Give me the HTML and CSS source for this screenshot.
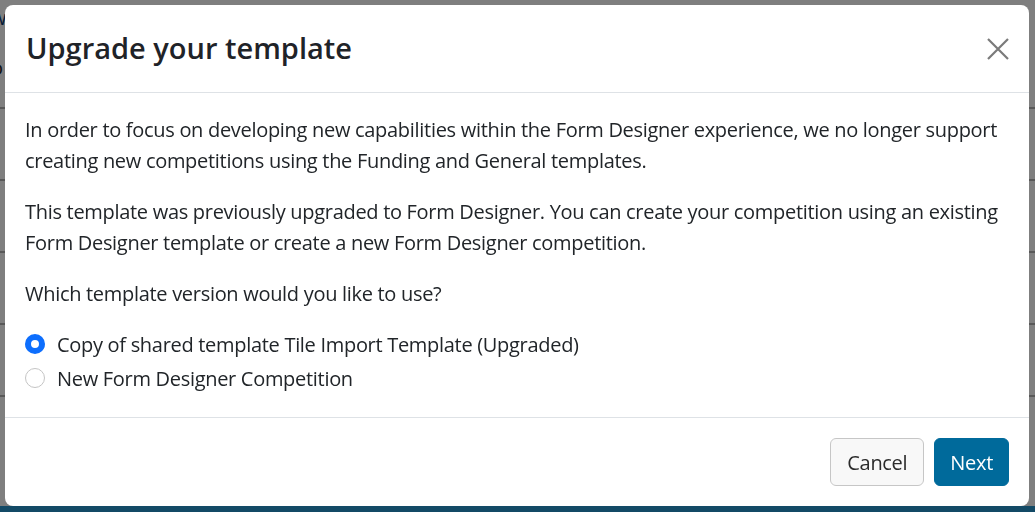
FILE: index.html
```html
<!DOCTYPE html>
<html lang="en">
<head>
  <meta charset="UTF-8" />
  <meta name="viewport" content="width=device-width, initial-scale=1.0"/>
  <title>Upgrade your template</title>
  <link rel="stylesheet" href="styles.css">
</head>
<body>
  <div class="page">
    <div class="pageRow pageTop">
      <span class="pageText linkText">w</span>
      <span class="pageText">o</span>
    </div>
    <div class="pageRow"></div>
    <div class="pageRow"></div>
    <div class="pageRow"></div>
    <div class="pageRow"></div>
    <div class="pageFooter"></div>
  </div>

  <div class="backdrop"></div>

  <div class="dialog" role="dialog">
    <div class="dialogHeader">
      <h2 class="dialogTitle">Upgrade your template</h2>
      <button class="closeBtn" aria-label="Close">
        <svg width="22" height="22" viewBox="0 0 22 22">
          <path d="M1 1 L21 21 M21 1 L1 21" stroke="#7a7a7a" stroke-width="2.2" fill="none"/>
        </svg>
      </button>
    </div>

    <div class="dialogBody">
      <p>In order to focus on developing new capabilities within the Form Designer experience, we no longer support creating new competitions using the Funding and General templates.</p>
      <p>This template was previously upgraded to Form Designer. You can create your competition using an existing Form Designer template or create a new Form Designer competition.</p>
      <p class="question">Which template version would you like to use?</p>

      <label class="option">
        <input type="radio" name="version" checked>
        <span class="radioMark"></span>
        Copy of shared template Tile Import Template (Upgraded)
      </label>
      <label class="option">
        <input type="radio" name="version">
        <span class="radioMark"></span>
        New Form Designer Competition
      </label>
    </div>

    <div class="dialogFooter">
      <button class="btn btnCancel">Cancel</button>
      <button class="btn btnNext">Next</button>
    </div>
  </div>
</body>
</html>
```

FILE: styles.css
```css
* {
  box-sizing: border-box;
}

body {
  margin: 0;
  height: 512px;
  overflow: hidden;
  font-family: 'Open Sans', 'Noto Sans', sans-serif;
  background: #fff;
  color: #212529;
}

.page {
  height: 512px;
  display: flex;
  flex-direction: column;
}

.pageRow {
  height: 72px;
  border-bottom: 2px solid #b0b0b0;
}

.pageTop {
  height: 109px;
  display: flex;
  flex-direction: column;
  gap: 20px;
  padding-top: 3px;
}

.pageText {
  display: block;
  margin-left: -9px;
  font-size: 20px;
  line-height: 30px;
  color: #222;
}

.linkText {
  color: #0b3a6e;
}

.pageFooter {
  margin-top: auto;
  height: 6px;
  background: #2694cc;
}

.backdrop {
  position: fixed;
  inset: 0;
  background: rgba(0, 0, 0, 0.5);
}

.dialog {
  position: fixed;
  left: 5px;
  top: 5px;
  width: 1024px;
  height: 501px;
  background: #fff;
  border-radius: 8px;
  display: flex;
  flex-direction: column;
}

.dialogHeader {
  height: 88px;
  flex-shrink: 0;
  display: flex;
  align-items: center;
  justify-content: space-between;
  padding: 0 20px 0 21px;
  border-bottom: 1px solid #dee2e6;
}

.dialogTitle {
  margin: 0;
  font-size: 29px;
  font-weight: 600;
  line-height: 1.2;
  color: #1f2328;
}

.closeBtn {
  background: transparent;
  border: 0;
  padding: 0;
  width: 22px;
  height: 22px;
  cursor: pointer;
  display: flex;
}

.dialogBody {
  padding: 21px 20px 22px;
  font-size: 20px;
  line-height: 31px;
  letter-spacing: -0.3px;
  border-bottom: 1px solid #dee2e6;
}

.dialogBody p {
  margin: 0 0 20px;
}

.dialogBody .question {
  margin-bottom: 18px;
}

.option {
  display: flex;
  align-items: center;
  gap: 12px;
  height: 34px;
  cursor: pointer;
}

.option input {
  display: none;
}

.radioMark {
  width: 20px;
  height: 20px;
  border-radius: 50%;
  border: 1px solid #c4c4c4;
  background: #fff;
  flex-shrink: 0;
}

.option input:checked + .radioMark {
  border: 6px solid #0d6efd;
  background: #fff;
}

.dialogFooter {
  flex: 1;
  display: flex;
  align-items: center;
  justify-content: flex-end;
  gap: 10px;
  padding: 0 20px;
}

.btn {
  height: 48px;
  padding: 0 16px;
  font-family: inherit;
  font-size: 20px;
  letter-spacing: -0.3px;
  border-radius: 6px;
  cursor: pointer;
}

.btnCancel {
  background: #f8f8f8;
  border: 1px solid #c6c6c6;
  color: #2b2b2b;
}

.btnNext {
  padding: 0 15px;
  background: #006a9b;
  border: 1px solid #006a9b;
  color: #fff;
}
```
